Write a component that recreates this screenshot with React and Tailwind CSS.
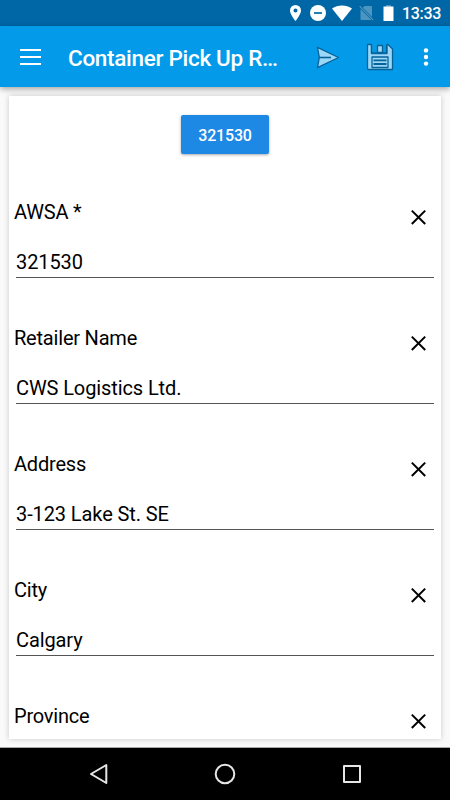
import React, { useState } from "react";

const initialFields = [
  { id: "awsa", label: "AWSA *", value: "321530" },
  { id: "retailer", label: "Retailer Name", value: "CWS Logistics Ltd." },
  { id: "address", label: "Address", value: "3-123 Lake St. SE" },
  { id: "city", label: "City", value: "Calgary" },
  { id: "province", label: "Province", value: "" },
];

function StatusBar() {
  return (
    <div className="flex h-[26px] shrink-0 items-center justify-end bg-[#0067a6] pr-2 text-white">
      <svg className="mr-[9px] h-4 w-[11px]" viewBox="0 0 11 16">
        <path
          d="M5.5 0A5.5 5.5 0 0 0 0 5.5C0 9.6 5.5 16 5.5 16S11 9.6 11 5.5A5.5 5.5 0 0 0 5.5 0Zm0 7.5a2 2 0 1 1 0-4 2 2 0 0 1 0 4Z"
          fill="currentColor"
        />
      </svg>
      <svg className="mr-[6px] h-4 w-4" viewBox="0 0 16 16">
        <circle cx="8" cy="8" r="8" fill="currentColor" />
        <path d="M4 8h8" stroke="#0067a6" strokeWidth="1.7" />
      </svg>
      <svg className="mr-[7px] h-4 w-5" viewBox="0 0 20 16">
        <path d="M10 16 0 3.4C5.8-.6 14.2-.6 20 3.4Z" fill="currentColor" />
      </svg>
      <svg className="mr-[9px] h-4 w-[15px]" viewBox="0 0 15 16">
        <path
          d="M5.5 1H12q1 0 1 1v10L3.8 2.8ZM1.5 4l11 11H2.5q-1 0-1-1Z"
          fill="#4d95c1"
        />
        <path d="m.7 1.2 13.5 14" stroke="#4d95c1" strokeWidth="1.2" />
      </svg>
      <svg className="mr-2 h-4 w-[11px]" viewBox="0 0 11 16">
        <path d="M3 0h5v1.5h2.5V16H.5V1.5H3Z" fill="currentColor" />
        <path d="M3 0h5v1.5H3Z" fill="#4d95c1" />
      </svg>
      <span className="w-10 pt-px text-base leading-none font-medium tracking-[-0.3px] whitespace-nowrap">
        13:33
      </span>
    </div>
  );
}

function AppBar() {
  return (
    <header className="z-10 flex h-[61px] shrink-0 items-center bg-[#039be9] pl-5 text-white shadow-[0_2px_6px_rgba(0,0,0,0.35)]">
      <button className="mr-[27px] shrink-0" aria-label="Menu">
        <svg className="h-4 w-[21px]" viewBox="0 0 21 16">
          <path d="M0 1h21M0 8h21M0 15h21" stroke="white" strokeWidth="2" />
        </svg>
      </button>
      <h1 className="w-[212px] shrink-0 pt-[3px] text-[22.5px] leading-8 font-medium tracking-[-0.3px] whitespace-nowrap">
        Container Pick Up R…
      </h1>
      <button className="ml-9 shrink-0" aria-label="Send">
        <svg className="h-6 w-6" viewBox="0 0 24 24">
          <path
            d="M1.5 2.3 22.5 12.5 1.5 22.7 3.3 12.5Z"
            fill="#9bd7f6"
            stroke="#07629a"
            strokeWidth="1.3"
            strokeLinejoin="round"
          />
          <path d="M3.3 12.5H15" stroke="#07629a" strokeWidth="1.6" />
        </svg>
      </button>
      <button className="ml-[26px] shrink-0" aria-label="Save">
        <svg className="h-7 w-7" viewBox="0 0 28 28">
          <g stroke="#07629a" strokeWidth="1.3" strokeLinejoin="round">
            <path
              d="M2 1.5H5.5V10.5H21V1.5H22L26.5 6V26.5H2.5Q1.5 26.5 1.5 25.5V2Q1.5 1.5 2 1.5Z"
              fill="#9bd7f6"
            />
            <path d="M5.5 1.5H21V10.5H5.5Z" fill="#079ae4" stroke="none" />
            <path d="M5.5 1.5V10H20.500V1.500" fill="none" />
            <path d="M11.500 2.500H16.500V9.500H11.500Z" fill="#9bd7f6" />
            <path d="M6 14H22V24.5H6Z" fill="#9bd7f6" />
            <path d="M7.5 17.3H20.5M7.5 21H20.5" strokeWidth="1.8" />
          </g>
        </svg>
      </button>
      <button className="ml-[29px] shrink-0" aria-label="More options">
        <svg className="h-[18px] w-[6px]" viewBox="0 0 6 18">
          <circle cx="3" cy="2.4" r="2.2" fill="white" />
          <circle cx="3" cy="9" r="2.2" fill="white" />
          <circle cx="3" cy="15.6" r="2.2" fill="white" />
        </svg>
      </button>
    </header>
  );
}

function Field({ field, onChange, onClear }) {
  return (
    <div className="h-[126px] shrink-0 pt-[10px] pr-[7px] pl-[5px]">
      <div className="flex justify-between">
        <label htmlFor={field.id} className="leading-6 tracking-[-0.2px]">
          {field.label}
        </label>
        <button
          className="mt-[9px] mr-2 h-4 w-4"
          aria-label="Clear"
          onClick={() => onClear(field.id)}
        >
          <svg className="h-4 w-4" viewBox="0 0 16 16">
            <path
              d="m1.8 1.6 13.4 13.4M15.2 1.6 1.8 15"
              stroke="black"
              strokeWidth="2"
            />
          </svg>
        </button>
      </div>
      <input
        id={field.id}
        type="text"
        value={field.value}
        onChange={onChange}
        className="mt-[25px] ml-[2px] block h-[28px] w-[418px] border-b border-[#555555] pb-[3px] leading-6 tracking-[-0.1px] outline-none"
      />
    </div>
  );
}

function NavBar() {
  return (
    <nav className="flex h-[52px] shrink-0 items-center justify-between bg-black pr-[88px] pl-[88px]">
      <svg className="h-[22px] w-5" viewBox="0 0 20 22">
        <path
          d="M18.3 2v18L3 11Z"
          fill="none"
          stroke="#e6e6e6"
          strokeWidth="2"
          strokeLinejoin="round"
        />
      </svg>
      <svg className="h-[22px] w-[22px]" viewBox="0 0 22 22">
        <circle cx="11" cy="11" r="9.3" fill="none" stroke="#e6e6e6" strokeWidth="2" />
      </svg>
      <svg className="h-5 w-5" viewBox="0 0 20 20">
        <path
          d="M2 2h16v16H2Z"
          fill="none"
          stroke="#e6e6e6"
          strokeWidth="2"
          strokeLinejoin="round"
        />
      </svg>
    </nav>
  );
}

export default function App() {
  const [fields, setFields] = useState(initialFields);

  function updateField(id, value) {
    setFields(fields.map((f) => (f.id === id ? { ...f, value } : f)));
  }

  return (
    <div className="flex h-[800px] w-[450px] flex-col overflow-hidden bg-[#fafafa] font-['Roboto',sans-serif] text-xl text-black">
      <StatusBar />
      <AppBar />
      <main className="flex min-h-0 flex-1 flex-col border-b border-[#a8a8a8] px-[9px] pt-[9px] pb-2">
        <div className="flex min-h-0 flex-1 flex-col overflow-hidden bg-white shadow-[0_0_6px_rgba(0,0,0,0.2)]">
          <div className="flex h-[94px] shrink-0 justify-center pt-[19px]">
            <button className="h-[39px] w-[88px] rounded-[2px] bg-[#1e88e5] pt-[2px] text-base font-medium tracking-[-0.2px] text-white shadow-[0_1px_3px_rgba(0,0,0,0.35)]">
              321530
            </button>
          </div>
          {fields.map((field) => (
            <Field
              key={field.id}
              field={field}
              onChange={(e) => updateField(e.target.id, e.target.value)}
              onClear={(id) => updateField(id, "")}
            />
          ))}
        </div>
      </main>
      <NavBar />
    </div>
  );
}
